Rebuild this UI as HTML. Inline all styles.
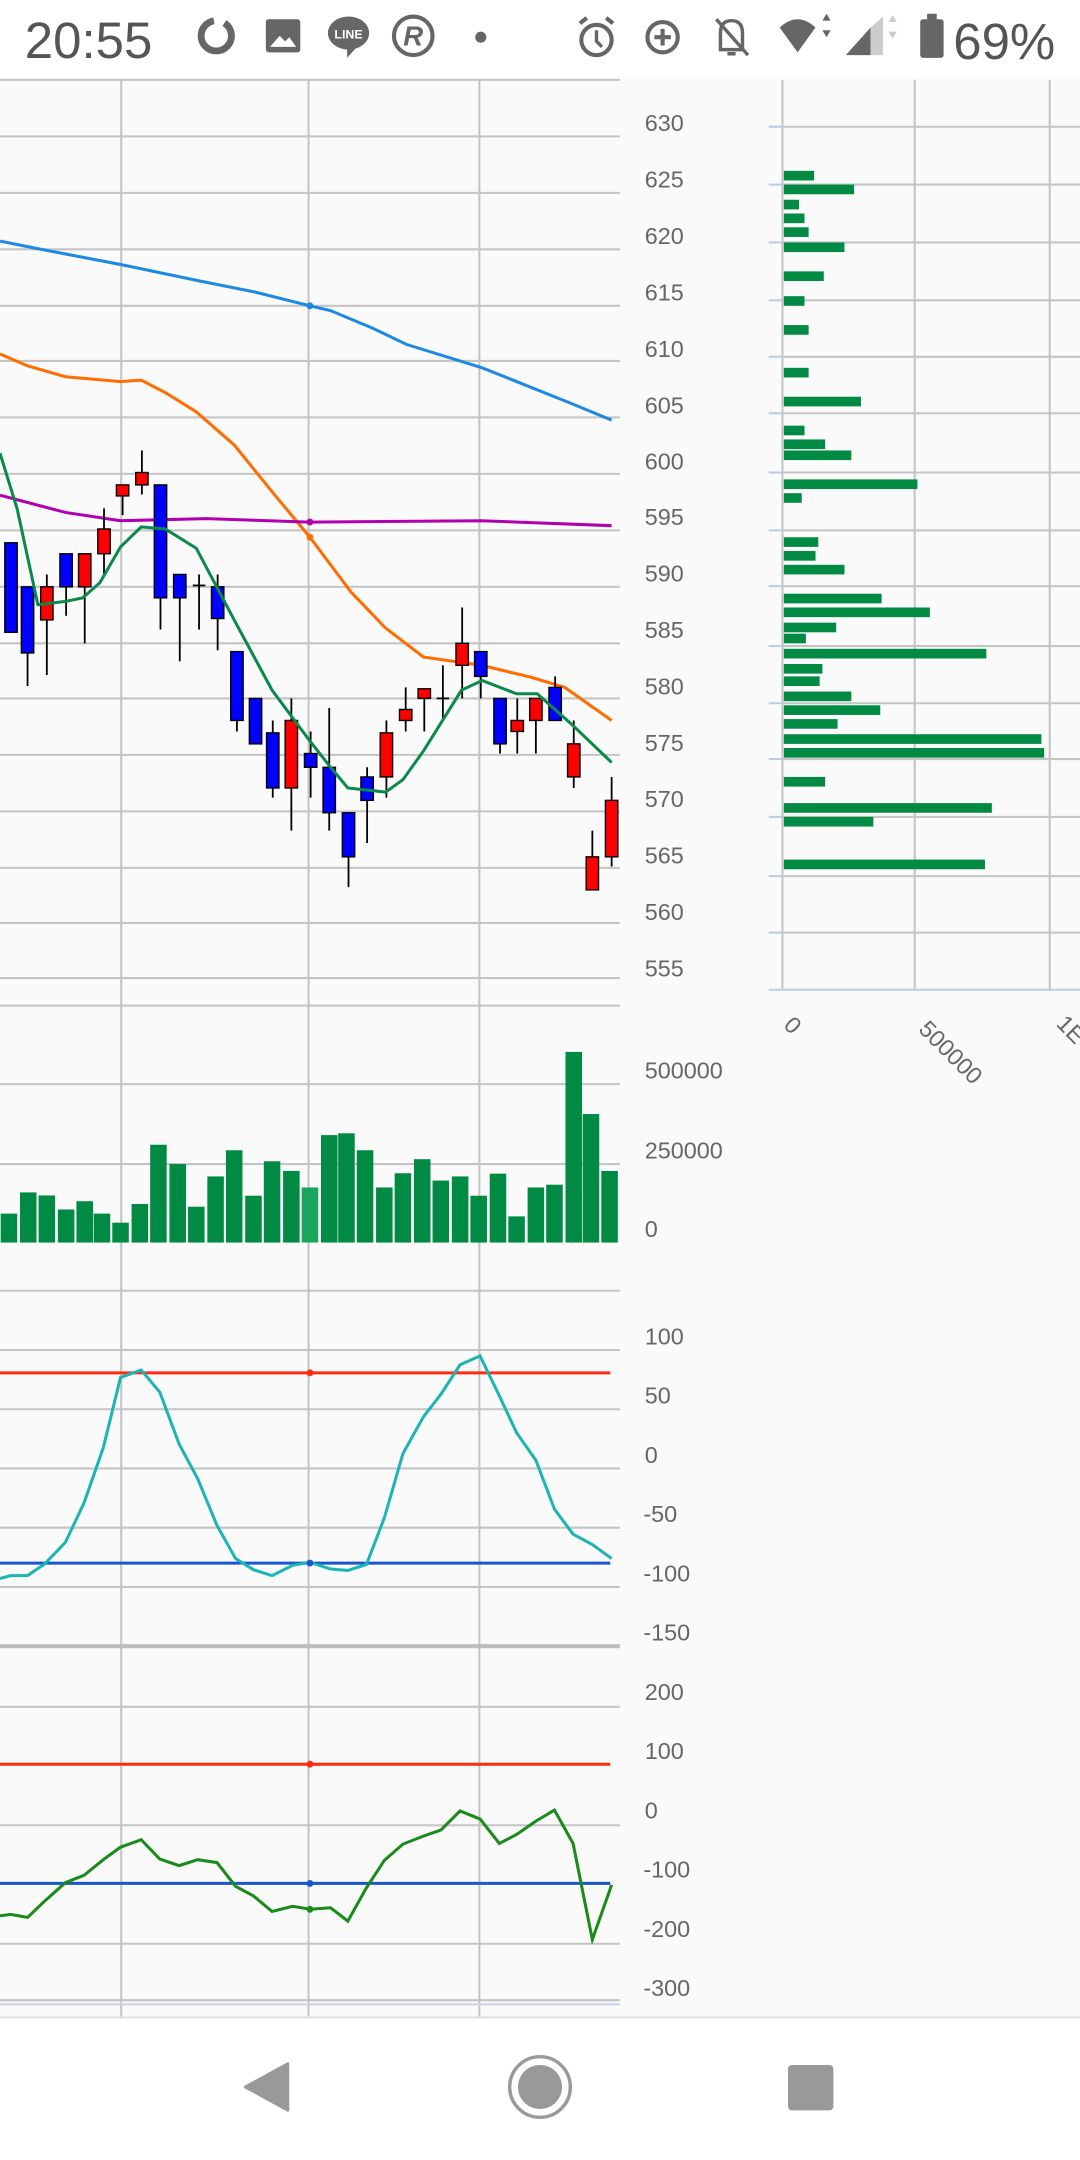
<!DOCTYPE html>
<html><head><meta charset="utf-8"><style>
html,body{margin:0;padding:0;background:#fff;}
svg{display:block;}
text{font-family:"Liberation Sans",sans-serif;}
</style></head><body>
<svg width="1080" height="2160" viewBox="0 0 784 1568" xmlns="http://www.w3.org/2000/svg">
<rect x="0" y="0" width="784" height="1568" fill="#ffffff"/>
<rect x="0" y="56" width="784" height="1408" fill="#fafafa"/>
<!-- status bar -->
<text x="18" y="42" font-size="37" fill="#555">20:55</text>
<circle cx="157" cy="26" r="11" fill="none" stroke="#666" stroke-width="5" stroke-dasharray="50 8"/>
<rect x="193" y="14" width="25" height="24" rx="2" fill="#666"/>
<path d="M196 34 L203 26 L207 30 L210 27 L215 34 Z" fill="#fff"/>
<ellipse cx="253" cy="24" rx="15" ry="12" fill="#666"/>
<path d="M252 34 L252 42 L260 33 Z" fill="#666"/>
<text x="253" y="28" font-size="9" font-weight="bold" fill="#fff" text-anchor="middle">LINE</text>
<circle cx="300" cy="26" r="14" fill="none" stroke="#666" stroke-width="3"/>
<text x="300" y="33" font-size="20" font-weight="bold" fill="#666" text-anchor="middle" font-style="italic">R</text>
<circle cx="349" cy="27" r="4" fill="#666"/>
<circle cx="433" cy="29" r="11" fill="none" stroke="#666" stroke-width="3"/>
<path d="M433 22 V30 L437 34" stroke="#666" stroke-width="2.5" fill="none"/>
<path d="M421 17 L426 13 M445 17 L440 13" stroke="#666" stroke-width="3"/>
<circle cx="481" cy="27" r="11" fill="none" stroke="#666" stroke-width="3"/>
<path d="M481 21 V33 M475 27 H487" stroke="#666" stroke-width="3"/>
<path d="M523 36 V24 Q523 15 531 15 Q539 15 539 24 V36 Z M528 39 H534" fill="none" stroke="#666" stroke-width="2.5"/>
<path d="M520 14 L543 40" stroke="#666" stroke-width="2.5"/>
<path d="M566 20 Q579 8 592 20 L579 38 Z" fill="#666"/>
<path d="M597 15 L600 10 L603 15 Z M597 22 L600 27 L603 22 Z" fill="#666"/>
<path d="M614 40 L632 20 V40 Z" fill="#666"/>
<path d="M632 20 L641 12 V40 H632 Z" fill="#ccc"/>
<path d="M645 16 L648 11 L651 16 Z M645 23 L648 28 L651 23 Z" fill="#ccc"/>
<rect x="668" y="14" width="17" height="28" rx="2" fill="#666"/>
<rect x="673" y="10" width="7" height="5" fill="#666"/>
<text x="692" y="43" font-size="37" fill="#555">69%</text>

<!-- main chart grid -->
<g stroke="#c4c4c4" stroke-width="1.5">
<line x1="0" y1="58" x2="450" y2="58"/>
<line x1="0" y1="99" x2="450" y2="99"/>
<line x1="0" y1="140" x2="450" y2="140"/>
<line x1="0" y1="181" x2="450" y2="181"/>
<line x1="0" y1="222" x2="450" y2="222"/>
<line x1="0" y1="262" x2="450" y2="262"/>
<line x1="0" y1="303" x2="450" y2="303"/>
<line x1="0" y1="344" x2="450" y2="344"/>
<line x1="0" y1="385" x2="450" y2="385"/>
<line x1="0" y1="426" x2="450" y2="426"/>
<line x1="0" y1="467" x2="450" y2="467"/>
<line x1="0" y1="507" x2="450" y2="507"/>
<line x1="0" y1="548" x2="450" y2="548"/>
<line x1="0" y1="589" x2="450" y2="589"/>
<line x1="0" y1="630" x2="450" y2="630"/>
<line x1="0" y1="670" x2="450" y2="670"/>
<line x1="0" y1="710" x2="450" y2="710"/>
<!-- volume -->
<line x1="0" y1="730" x2="450" y2="730"/>
<line x1="0" y1="787" x2="450" y2="787"/>
<line x1="0" y1="845" x2="450" y2="845"/>
<line x1="0" y1="937" x2="450" y2="937"/>
<line x1="0" y1="980" x2="450" y2="980"/>
<line x1="0" y1="1023" x2="450" y2="1023"/>
<line x1="0" y1="1066" x2="450" y2="1066"/>
<line x1="0" y1="1109" x2="450" y2="1109"/>
<line x1="0" y1="1152" x2="450" y2="1152"/>
<line x1="0" y1="1239" x2="450" y2="1239"/>
<line x1="0" y1="1325" x2="450" y2="1325"/>
<line x1="0" y1="1411" x2="450" y2="1411"/>
<line x1="0" y1="1452" x2="450" y2="1452"/>
<line x1="88" y1="58" x2="88" y2="1464"/>
<line x1="224" y1="58" x2="224" y2="1464"/>
<line x1="348" y1="58" x2="348" y2="1464"/>
</g>
<line x1="0" y1="1195" x2="450" y2="1195" stroke="#bdbdbd" stroke-width="3"/>
<line x1="0" y1="1455" x2="450" y2="1455" stroke="#c8d4ea" stroke-width="1.5"/>
<line x1="0" y1="1464.5" x2="784" y2="1464.5" stroke="#e0e0e0" stroke-width="1.5"/>

<!-- price labels -->
<g font-size="17" fill="#666">
<text x="468" y="95">630</text><text x="468" y="136">625</text><text x="468" y="177">620</text>
<text x="468" y="218">615</text><text x="468" y="259">610</text><text x="468" y="300">605</text>
<text x="468" y="341">600</text><text x="468" y="381">595</text><text x="468" y="422">590</text>
<text x="468" y="463">585</text><text x="468" y="504">580</text><text x="468" y="545">575</text>
<text x="468" y="586">570</text><text x="468" y="627">565</text><text x="468" y="668">560</text>
<text x="468" y="709">555</text>
<text x="468" y="783">500000</text><text x="468" y="841">250000</text><text x="468" y="898">0</text>
<text x="468" y="976">100</text><text x="468" y="1019">50</text><text x="468" y="1062">0</text>
<text x="467" y="1105">-50</text><text x="467" y="1148">-100</text><text x="467" y="1191">-150</text>
<text x="468" y="1234">200</text><text x="468" y="1277">100</text><text x="468" y="1320">0</text>
<text x="467" y="1363">-100</text><text x="467" y="1406">-200</text><text x="467" y="1449">-300</text>
</g>

<!-- MA lines -->
<polyline fill="none" stroke="#1e88e5" stroke-width="2.2" points="0,175 30,181 87.5,192 145,204 185,212 225,222 240,225.5 270,238 295,250 350,267 375,277 415,293 444,305"/>
<polyline fill="none" stroke="#ff6d00" stroke-width="2.2" points="0,257 20,265.6 47.5,273.5 87.5,277 102.5,276 120,285 142.5,299 170,323 200,360 225,390 255,430 280,456 307.5,477 350,483 385,491.5 410,499 444,523"/>
<polyline fill="none" stroke="#b000b0" stroke-width="2.2" points="0,359.5 47.5,372 87.5,378 150,376.5 225,379 350,378 444,381.6"/>
<circle cx="225" cy="222" r="2.5" fill="#1e88e5"/>
<circle cx="225" cy="390" r="2.5" fill="#ff6d00"/>
<circle cx="225" cy="379" r="2.5" fill="#b000b0"/>

<!-- candles wicks -->
<g stroke="#000" stroke-width="1.3">
<line x1="20" y1="426" x2="20" y2="498"/><line x1="34" y1="417" x2="34" y2="490"/>
<line x1="48" y1="402" x2="48" y2="447"/><line x1="61.5" y1="402" x2="61.5" y2="467"/>
<line x1="75.5" y1="369" x2="75.5" y2="418"/><line x1="89" y1="352" x2="89" y2="374"/>
<line x1="103" y1="327" x2="103" y2="359"/><line x1="116.5" y1="352" x2="116.5" y2="457"/>
<line x1="130.5" y1="417" x2="130.5" y2="480"/><line x1="144.5" y1="417" x2="144.5" y2="457"/>
<line x1="158" y1="417" x2="158" y2="472"/><line x1="172" y1="473" x2="172" y2="531"/>
<line x1="198" y1="523" x2="198" y2="579"/><line x1="211.5" y1="507" x2="211.5" y2="603"/>
<line x1="225.5" y1="531" x2="225.5" y2="579"/><line x1="239" y1="514" x2="239" y2="603"/>
<line x1="253" y1="590" x2="253" y2="644"/><line x1="266.5" y1="557" x2="266.5" y2="612"/>
<line x1="280.5" y1="523" x2="280.5" y2="579"/><line x1="294.5" y1="499" x2="294.5" y2="531"/>
<line x1="308" y1="500" x2="308" y2="531"/><line x1="321.5" y1="483" x2="321.5" y2="523"/>
<line x1="335.5" y1="441" x2="335.5" y2="507"/><line x1="349" y1="473" x2="349" y2="507"/>
<line x1="363" y1="507" x2="363" y2="547"/><line x1="375.5" y1="507" x2="375.5" y2="547"/>
<line x1="389" y1="507" x2="389" y2="547"/><line x1="403" y1="491" x2="403" y2="523"/>
<line x1="416.5" y1="523" x2="416.5" y2="572"/><line x1="430" y1="603" x2="430" y2="646"/>
<line x1="444" y1="564" x2="444" y2="629"/>
<line x1="140" y1="425" x2="149" y2="425"/><line x1="317" y1="507" x2="326" y2="507"/>
</g>
<!-- bodies -->
<g stroke="#000" stroke-width="1">
<rect x="3.5" y="394" width="9" height="65" fill="#0000ff"/>
<rect x="15.5" y="426" width="9" height="48" fill="#0000ff"/>
<rect x="29.5" y="426" width="9" height="24" fill="#ff0000"/>
<rect x="43.5" y="402" width="9" height="24" fill="#0000ff"/>
<rect x="57" y="402" width="9" height="24" fill="#ff0000"/>
<rect x="71" y="384" width="9" height="18" fill="#ff0000"/>
<rect x="84.5" y="352" width="9" height="8" fill="#ff0000"/>
<rect x="98.5" y="343" width="9" height="9" fill="#ff0000"/>
<rect x="112" y="352" width="9" height="82" fill="#0000ff"/>
<rect x="126" y="417" width="9" height="17" fill="#0000ff"/>
<rect x="153.5" y="426" width="9" height="23" fill="#0000ff"/>
<rect x="167.5" y="473" width="9" height="50" fill="#0000ff"/>
<rect x="181" y="507" width="9" height="33" fill="#0000ff"/>
<rect x="193.5" y="532" width="9" height="40" fill="#0000ff"/>
<rect x="207" y="523" width="9" height="49" fill="#ff0000"/>
<rect x="221" y="547" width="9" height="10" fill="#0000ff"/>
<rect x="234.5" y="557" width="9" height="33" fill="#0000ff"/>
<rect x="248.5" y="590" width="9" height="32" fill="#0000ff"/>
<rect x="262" y="564" width="9" height="17" fill="#0000ff"/>
<rect x="276" y="532" width="9" height="32" fill="#ff0000"/>
<rect x="290" y="515" width="9" height="8" fill="#ff0000"/>
<rect x="303.5" y="500" width="9" height="7" fill="#ff0000"/>
<rect x="331" y="467" width="9" height="16" fill="#ff0000"/>
<rect x="344.5" y="473" width="9" height="18" fill="#0000ff"/>
<rect x="358.5" y="507" width="9" height="33" fill="#0000ff"/>
<rect x="371" y="523" width="9" height="8" fill="#ff0000"/>
<rect x="384.5" y="507" width="9" height="16" fill="#ff0000"/>
<rect x="398.5" y="499" width="9" height="24" fill="#0000ff"/>
<rect x="412" y="540" width="9" height="24" fill="#ff0000"/>
<rect x="425.5" y="622" width="9" height="24" fill="#ff0000"/>
<rect x="439.5" y="581" width="9" height="41" fill="#ff0000"/>
</g>
<polyline fill="none" stroke="#0a8a4a" stroke-width="2.2" points="0,329 12.5,369.6 27.5,439 47.5,436.6 60,434 72.5,423 87.5,397 102.5,382.5 120,384 142.5,398 170,450 197.5,501 225,538 240,557 252.5,572 280,575 292.5,566 307.5,545 335,501 350,494 375,503.6 390,503.6 415,525.8 444,553.5"/>

<!-- volume bars -->
<g fill="#008a44">
<rect x="0.5" y="881" width="12" height="21"/>
<rect x="14.5" y="865.6" width="12" height="36.4"/>
<rect x="28" y="867.8" width="12" height="34.2"/>
<rect x="42" y="878" width="12" height="24"/>
<rect x="55.5" y="872" width="12" height="30"/>
<rect x="68" y="881" width="12" height="21"/>
<rect x="81.5" y="887.6" width="12" height="14.4"/>
<rect x="95.5" y="874" width="12" height="28"/>
<rect x="109" y="831" width="12" height="71"/>
<rect x="123" y="845" width="12" height="57"/>
<rect x="136.5" y="876" width="12" height="26"/>
<rect x="150.5" y="854" width="12" height="48"/>
<rect x="164" y="835" width="12" height="67"/>
<rect x="178" y="868" width="12" height="34"/>
<rect x="191.5" y="843" width="12" height="59"/>
<rect x="205.5" y="850" width="12" height="52"/>
<rect x="219" y="862" width="12" height="40" fill="#1aa45c"/>
<rect x="233" y="824" width="12" height="78"/>
<rect x="245.5" y="822.7" width="12" height="79.3"/>
<rect x="259" y="835" width="12" height="67"/>
<rect x="273" y="862" width="12" height="40"/>
<rect x="286.5" y="851.7" width="12" height="50.3"/>
<rect x="300.5" y="841.5" width="12" height="60.5"/>
<rect x="314" y="857" width="12" height="45"/>
<rect x="328" y="854" width="12" height="48"/>
<rect x="341.5" y="868" width="12" height="34"/>
<rect x="355.5" y="852" width="12" height="50"/>
<rect x="369" y="883" width="12" height="19"/>
<rect x="383" y="862" width="12" height="40"/>
<rect x="396.5" y="860" width="12" height="42"/>
<rect x="410.5" y="763.6" width="12" height="138.4"/>
<rect x="423" y="808.7" width="12" height="93.3"/>
<rect x="436.5" y="850" width="12" height="52"/>
</g>

<!-- CCI -->
<line x1="0" y1="996.6" x2="443" y2="996.6" stroke="#ff2a10" stroke-width="2.2"/>
<line x1="0" y1="1134.7" x2="443" y2="1134.7" stroke="#1a56d0" stroke-width="2.2"/>
<circle cx="225" cy="996.6" r="2.5" fill="#ff2a10"/>
<polyline fill="none" stroke="#1eb4b4" stroke-width="2.2" points="0,1145.9 7.5,1143.8 20,1143.8 32.5,1135.2 47.5,1119.6 61,1091 75,1050.9 87.5,999.9 102.5,994.5 116,1010.6 130,1048.2 143.5,1073.4 157.5,1107.3 171,1131.4 184,1139.5 197.5,1143.8 212.5,1136.3 225,1134.1 240,1139 252.5,1140 266,1135.7 279,1101.9 292.5,1055.2 307.5,1028.3 320,1012.2 334,990.7 348.5,984.3 362.5,1013.3 375,1040.1 389,1060 402.5,1095.5 416,1113.7 430,1121.2 444,1131.4"/>
<circle cx="225" cy="1134.7" r="2.5" fill="#1a56d0"/>

<!-- bottom osc -->
<line x1="0" y1="1280.7" x2="443" y2="1280.7" stroke="#ff2a10" stroke-width="2.2"/>
<line x1="0" y1="1367.2" x2="443" y2="1367.2" stroke="#1a56d0" stroke-width="2.2"/>
<circle cx="225" cy="1280.7" r="2.5" fill="#ff2a10"/>
<circle cx="225" cy="1367.2" r="2.5" fill="#1a56d0"/>
<polyline fill="none" stroke="#1a8a1a" stroke-width="2.2" points="0,1390.8 7.5,1389.7 20,1391.9 32.5,1380 47.5,1366.6 61,1361.3 75,1350 87.5,1340.9 102.5,1335.5 116,1349.5 130,1354.3 143.5,1350 157.5,1352.1 171,1369.3 184,1376.3 197.5,1387.6 212.5,1383.8 225,1386 240,1384.9 252.5,1394.6 266,1370.4 279,1350.5 292.5,1338.7 307.5,1332.8 320,1328.5 334,1314.6 348.5,1320.5 362.5,1338.2 375,1331.7 389,1322 402.5,1314 416,1338.2 430,1408 444,1368.3"/>
<circle cx="225" cy="1386" r="2.5" fill="#1a8a1a"/>

<!-- right panel: volume profile -->
<g stroke="#c4c4c4" stroke-width="1.5">
<line x1="568" y1="58" x2="568" y2="718"/>
<line x1="664" y1="58" x2="664" y2="718"/>
<line x1="762" y1="58" x2="762" y2="718"/>
<line x1="568" y1="92" x2="784" y2="92"/><line x1="568" y1="134" x2="784" y2="134"/>
<line x1="568" y1="176" x2="784" y2="176"/><line x1="568" y1="218" x2="784" y2="218"/>
<line x1="568" y1="259" x2="784" y2="259"/><line x1="568" y1="300" x2="784" y2="300"/>
<line x1="568" y1="343" x2="784" y2="343"/><line x1="568" y1="385" x2="784" y2="385"/>
<line x1="568" y1="425.5" x2="784" y2="425.5"/><line x1="568" y1="469" x2="784" y2="469"/>
<line x1="568" y1="510.5" x2="784" y2="510.5"/><line x1="568" y1="551" x2="784" y2="551"/>
<line x1="568" y1="593" x2="784" y2="593"/><line x1="568" y1="636" x2="784" y2="636"/>
<line x1="568" y1="677" x2="784" y2="677"/>
</g>
<g stroke="#b9cde8" stroke-width="1.5">
<line x1="558" y1="92" x2="568" y2="92"/><line x1="558" y1="134" x2="568" y2="134"/>
<line x1="558" y1="176" x2="568" y2="176"/><line x1="558" y1="218" x2="568" y2="218"/>
<line x1="558" y1="259" x2="568" y2="259"/><line x1="558" y1="300" x2="568" y2="300"/>
<line x1="558" y1="343" x2="568" y2="343"/><line x1="558" y1="385" x2="568" y2="385"/>
<line x1="558" y1="425.5" x2="568" y2="425.5"/><line x1="558" y1="469" x2="568" y2="469"/>
<line x1="558" y1="510.5" x2="568" y2="510.5"/><line x1="558" y1="551" x2="568" y2="551"/>
<line x1="558" y1="593" x2="568" y2="593"/><line x1="558" y1="636" x2="568" y2="636"/>
<line x1="558" y1="677" x2="568" y2="677"/>
<line x1="558" y1="718.5" x2="784" y2="718.5"/>
</g>
<g fill="#008a44">
<rect x="569" y="124" width="22" height="7"/><rect x="569" y="134" width="51" height="7"/>
<rect x="569" y="145" width="11" height="7"/><rect x="569" y="155" width="15" height="7"/>
<rect x="569" y="165" width="18" height="7"/><rect x="569" y="176" width="44" height="7"/>
<rect x="569" y="197" width="29" height="7"/><rect x="569" y="215" width="15" height="7"/>
<rect x="569" y="236" width="18" height="7"/><rect x="569" y="267" width="18" height="7"/>
<rect x="569" y="288" width="56" height="7"/><rect x="569" y="309" width="15" height="7"/>
<rect x="569" y="319" width="30" height="7"/><rect x="569" y="327" width="49" height="7"/>
<rect x="569" y="348" width="97" height="7"/><rect x="569" y="358" width="13" height="7"/>
<rect x="569" y="390" width="25" height="7"/><rect x="569" y="400" width="23" height="7"/>
<rect x="569" y="410" width="44" height="7"/><rect x="569" y="431" width="71" height="7"/>
<rect x="569" y="441" width="106" height="7"/><rect x="569" y="452" width="38" height="7"/>
<rect x="569" y="460" width="16" height="7"/><rect x="569" y="471" width="147" height="7"/>
<rect x="569" y="482" width="28" height="7"/><rect x="569" y="491" width="26" height="7"/>
<rect x="569" y="502" width="49" height="7"/><rect x="569" y="512" width="70" height="7"/>
<rect x="569" y="522" width="39" height="7"/><rect x="569" y="533" width="187" height="7"/>
<rect x="569" y="543" width="189" height="7"/><rect x="569" y="564" width="30" height="7"/>
<rect x="569" y="583" width="151" height="7"/><rect x="569" y="593" width="65" height="7"/>
<rect x="569" y="624" width="146" height="7"/>
</g>
<g font-size="17" fill="#666">
<text x="568" y="745" transform="rotate(45 568 745)">0</text>
<text x="666" y="748" transform="rotate(45 666 748)">500000</text>
<text x="766" y="744" transform="rotate(45 766 744)">1E</text>
</g>

<!-- nav bar -->
<path d="M178 1515 L209 1498 V1532 Z" fill="#999" stroke="#999" stroke-width="2" stroke-linejoin="round"/>
<circle cx="392" cy="1515" r="22" fill="none" stroke="#999" stroke-width="2.5"/>
<circle cx="392" cy="1515" r="16" fill="#999"/>
<rect x="572" y="1499" width="33" height="33" rx="3" fill="#999"/>
</svg>
</body></html>
